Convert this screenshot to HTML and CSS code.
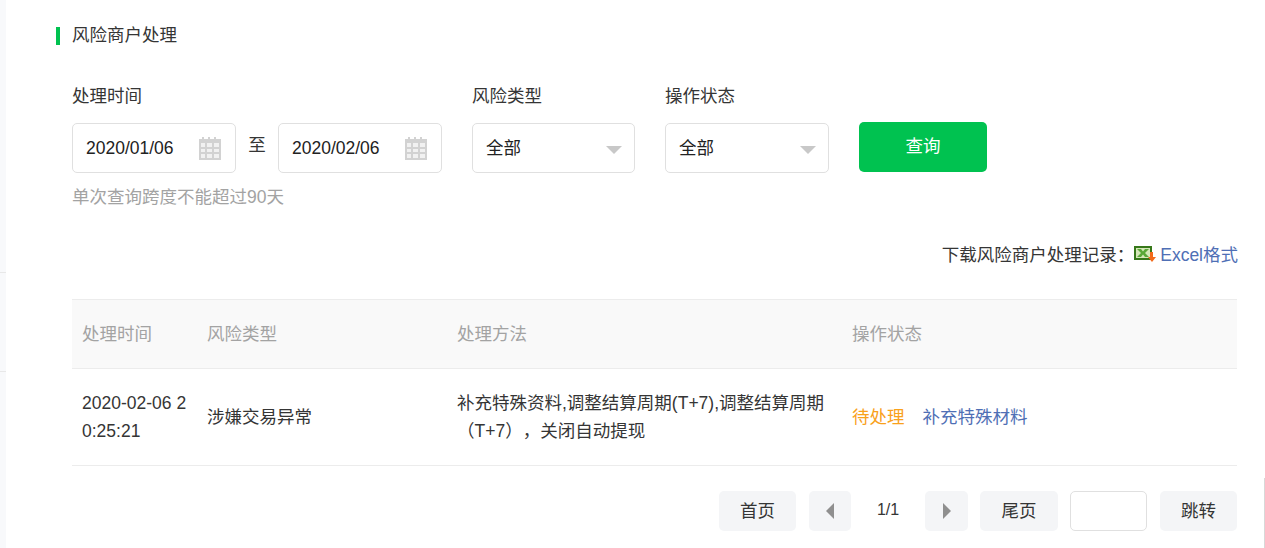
FILE: index.html
```html
<!DOCTYPE html>
<html>
<head>
  <title>风险商户处理</title>
  <link rel="stylesheet" href="styles.css">
</head>
<body>
  <div class="layout">
    <div class="side">
      <div class="side-item"></div>
      <div class="side-item"></div>
    </div>
    <div class="main">
      <h2 class="title">风险商户处理</h2>
      <form class="filters">
        <div class="field field-date">
          <div class="label">处理时间</div>
          <div class="date-range">
            <div class="box date-box">
              <span>2020/01/06</span>
              <svg class="cal" width="22" height="23" viewBox="0 0 22 23"><path fill="#d2d2d2" d="M0 2h3V0h2v2h4V0h2v2h4V0h2v2h5v21H0z"/><path fill="#f1f1f1" d="M2 6h4v4H2zM8 6h5v4H8zM15 6h5v4h-5zM2 12h4v3H2zM8 12h5v3H8zM15 12h5v3h-5zM2 17h4v4H2zM8 17h5v4H8zM15 17h5v4h-5z"/></svg>
            </div>
            <span class="to">至</span>
            <div class="box date-box">
              <span>2020/02/06</span>
              <svg class="cal" width="22" height="23" viewBox="0 0 22 23"><path fill="#d2d2d2" d="M0 2h3V0h2v2h4V0h2v2h4V0h2v2h5v21H0z"/><path fill="#f1f1f1" d="M2 6h4v4H2zM8 6h5v4H8zM15 6h5v4h-5zM2 12h4v3H2zM8 12h5v3H8zM15 12h5v3h-5zM2 17h4v4H2zM8 17h5v4H8zM15 17h5v4h-5z"/></svg>
            </div>
          </div>
          <div class="hint">单次查询跨度不能超过90天</div>
        </div>
        <div class="field">
          <div class="label">风险类型</div>
          <div class="box select-box select-a"><span>全部</span><i class="caret"></i></div>
        </div>
        <div class="field">
          <div class="label">操作状态</div>
          <div class="box select-box"><span>全部</span><i class="caret"></i></div>
        </div>
        <button type="button" class="btn-query">查询</button>
      </form>
      <div class="download">
        下载风险商户处理记录：
        <svg class="xls" width="22" height="16" viewBox="0 0 22 16"><path fill="#37781a" d="M0 0h18v14H0z"/><path fill="#d5e8b8" d="M2 2h14v10H2z"/><path fill="#5aa838" d="M3 3h4l2 2.500L11 3h4l-4 4 4 4h-4L9 8.500 7 11H3l4-4z"/><path fill="#f26a1b" d="M16 6h3v5h3l-4 5-4-5h2z"/></svg>
        <a class="link" href="#">Excel格式</a>
      </div>
      <table class="records">
        <thead>
          <tr>
            <th class="col-time">处理时间</th>
            <th class="col-type">风险类型</th>
            <th class="col-way">处理方法</th>
            <th>操作状态</th>
          </tr>
        </thead>
        <tbody>
          <tr>
            <td class="break">2020-02-06 20:25:21</td>
            <td>涉嫌交易异常</td>
            <td>补充特殊资料,调整结算周期(T+7),调整结算周期（T+7），关闭自动提现</td>
            <td><span class="pending">待处理</span><a class="link action" href="#">补充特殊材料</a></td>
          </tr>
        </tbody>
      </table>
      <div class="pager">
        <a class="page-btn btn-first">首页</a>
        <a class="page-btn btn-prev"><i class="arrow-left"></i></a>
        <span class="page-num">1/1</span>
        <a class="page-btn btn-next"><i class="arrow-right"></i></a>
        <a class="page-btn btn-last">尾页</a>
        <input class="page-input" type="text">
        <a class="page-btn btn-jump">跳转</a>
      </div>
    </div>
    <div class="edge"></div>
  </div>
</body>
</html>
```
FILE: styles.css
```css
* {
  box-sizing: border-box;
}

html, body {
  height: 100%;
}

body {
  margin: 0;
  background-color: #fff;
  color: #353535;
  font-family: "Liberation Sans", "Noto Sans CJK SC", sans-serif;
  font-size: 17.5px;
  text-spacing-trim: space-all;
  overflow: hidden;
}

.layout {
  display: flex;
  height: 548px;
}

.side {
  width: 6px;
  flex-shrink: 0;
  padding-top: 272px;
  background-color: #f8f9fb;
}

.side-item {
  height: 99px;
  border-top: 1px solid #e8e8e8;
}

.main {
  width: 1231px;
  flex-shrink: 0;
  padding: 27px 0 0 50px;
}

.title {
  height: 18px;
  margin: 0;
  padding-left: 12px;
  border-left: 4px solid #00c250;
  font-size: 17.5px;
  font-weight: normal;
  line-height: 16px;
}

.filters {
  display: flex;
  margin-top: 35px;
  padding-left: 16px;
}

.field {
  margin-right: 30px;
}

.label {
  height: 43px;
  padding-top: 2px;
  line-height: 28px;
}

.date-range {
  display: flex;
  align-items: center;
}

.box {
  display: flex;
  align-items: center;
  justify-content: space-between;
  height: 50px;
  padding: 0 14px 0 13px;
  border: 1px solid #e0e0e0;
  border-radius: 5px;
  color: #222;
}

.date-box {
  width: 164px;
}

.to {
  width: 42px;
  height: 50px;
  text-align: center;
  line-height: 45px;
}

.select-box {
  width: 164px;
  padding-right: 12px;
  padding-bottom: 4px;
}

.select-a {
  width: 163px;
}

.caret {
  width: 0;
  height: 0;
  margin-top: 8px;
  border-left: 8px solid transparent;
  border-right: 8px solid transparent;
  border-top: 8px solid #c8c8c8;
}

.hint {
  margin-top: 10px;
  color: #a3a3a3;
  line-height: 28px;
}

.btn-query {
  width: 128px;
  height: 50px;
  margin-top: 42px;
  padding-bottom: 6px;
  border: 0;
  border-radius: 5px;
  background-color: #00c250;
  color: #fff;
  font-family: inherit;
  font-size: 17.5px;
}

.download {
  display: flex;
  justify-content: flex-end;
  align-items: center;
  height: 28px;
  margin: 29px -1px 0 0;
  padding-bottom: 2px;
  white-space: pre;
}

.xls {
  margin: 2px 4px 0 0;
}

.link {
  color: #4f6fb5;
  text-decoration: none;
}

.records {
  width: 1165px;
  margin: 31px 0 0 16px;
  border-collapse: collapse;
  table-layout: fixed;
}

.records th {
  height: 69px;
  padding: 0 10px 3px;
  border-top: 1px solid #ececec;
  border-bottom: 1px solid #ececec;
  background-color: #f9f9f9;
  color: #a3a3a3;
  font-weight: normal;
  text-align: left;
}

.records td {
  padding: 20px 10px;
  border-bottom: 1px solid #ececec;
  line-height: 28px;
}

.col-time {
  width: 125px;
}

.col-type {
  width: 250px;
}

.col-way {
  width: 395px;
}

.break {
  word-break: break-all;
}

.pending {
  color: #f9a11b;
}

.action {
  margin-left: 18px;
}

.pager {
  display: flex;
  justify-content: flex-end;
  align-items: center;
  width: 1181px;
  margin-top: 25px;
}

.page-btn {
  display: flex;
  align-items: center;
  justify-content: center;
  height: 40px;
  border-radius: 5px;
  background-color: #f4f5f7;
}

.btn-first, .btn-jump {
  width: 77px;
  padding-bottom: 4px;
}

.btn-prev {
  width: 42px;
  margin-left: 13px;
}

.page-num {
  width: 74px;
  padding-bottom: 2px;
  text-align: center;
  font-size: 16px;
}

.btn-next {
  width: 43px;
}

.btn-last {
  width: 78px;
  margin-left: 12px;
  padding-bottom: 4px;
}

.page-input {
  width: 77px;
  height: 40px;
  margin: 0 13px 0 12px;
  border: 1px solid #e0e0e0;
  border-radius: 5px;
  background-color: #fff;
}

.arrow-left, .arrow-right {
  width: 0;
  height: 0;
  border-top: 8px solid transparent;
  border-bottom: 8px solid transparent;
}

.arrow-left {
  border-right: 8px solid #8f8f8f;
}

.arrow-right {
  border-left: 8px solid #8f8f8f;
}

.edge {
  width: 1px;
  height: 70px;
  margin: 478px 0 0 27px;
  background-color: #d8d8d8;
}
```
